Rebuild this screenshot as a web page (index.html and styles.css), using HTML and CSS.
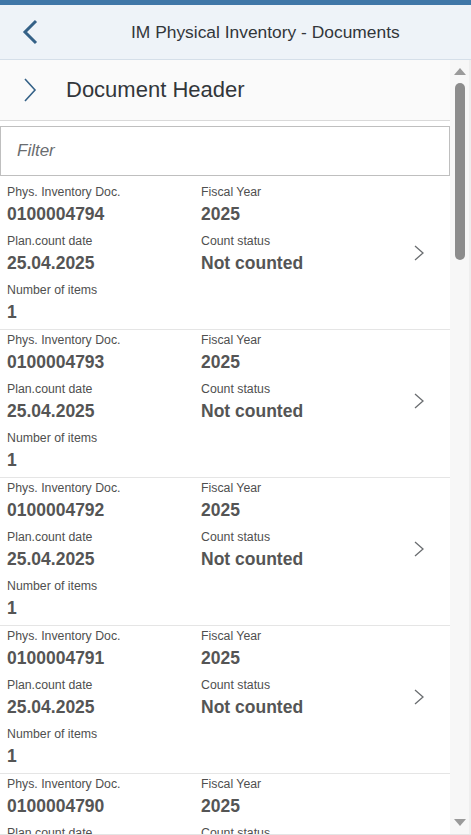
FILE: index.html
```html
<!DOCTYPE html>
<html lang="en">
<head>
  <meta charset="UTF-8" />
  <meta name="viewport" content="width=device-width, initial-scale=1.0"/>
  <title>IM Physical Inventory - Documents</title>
  <link rel="stylesheet" href="styles.css">
</head>
<body>

  <div class="shell">
    <div class="topline"></div>
    <header class="appbar">
      <button class="back" aria-label="Back">
        <svg width="18" height="26" viewBox="0 0 18 26"><path d="M15 2 L4 13 L15 24" fill="none" stroke="#346187" stroke-width="3"/></svg>
      </button>
      <h1 class="title">IM Physical Inventory - Documents</h1>
    </header>

    <div class="main">
      <div class="content">
        <div class="section">
          <svg width="14" height="24" viewBox="0 0 14 24"><path d="M2 1 L12 12 L2 23" fill="none" stroke="#346187" stroke-width="1.6"/></svg>
          <span>Document Header</span>
        </div>

        <div class="filter">
          <input type="text" placeholder="Filter">
        </div>

        <ul class="list" id="list"></ul>
      </div>

      <div class="scrollbar">
        <span class="arrow up"></span>
        <span class="thumb"></span>
        <span class="arrow down"></span>
      </div>
    </div>
  </div>

  <script>
    const docs = ['0100004794', '0100004793', '0100004792', '0100004791', '0100004790'];
    const list = document.getElementById('list');

    docs.forEach((doc) => {
      const li = document.createElement('li');
      li.className = 'item';
      li.innerHTML = `
        <div class="fields">
          <div class="field"><span class="label">Phys. Inventory Doc.</span><span class="value">${doc}</span></div>
          <div class="field"><span class="label">Fiscal Year</span><span class="value">2025</span></div>
          <div class="field"><span class="label">Plan.count date</span><span class="value">25.04.2025</span></div>
          <div class="field"><span class="label">Count status</span><span class="value">Not counted</span></div>
          <div class="field"><span class="label">Number of items</span><span class="value">1</span></div>
        </div>
        <svg class="nav" width="10" height="16" viewBox="0 0 10 16"><path d="M1 1 L9 8 L1 15" fill="none" stroke="#6a6d70" stroke-width="1.3"/></svg>`;
      list.appendChild(li);
    });
  </script>

</body>
</html>
```

FILE: styles.css
```css
html, body {
  margin: 0;
  height: 100%;
  overflow: hidden;
}
body {
  font-family: "Liberation Sans", Arial, sans-serif;
  color: #32363a;
  background-color: #ffffff;
}
.shell {
  height: 835px;
  display: flex;
  flex-direction: column;
}
.topline {
  height: 5px;
  background-color: #3f77a8;
  flex-shrink: 0;
}
.appbar {
  height: 55px;
  flex-shrink: 0;
  display: flex;
  align-items: center;
  background-color: #eef3f8;
  border-bottom: 1px solid #d5dfe9;
  box-sizing: border-box;
}
.back {
  background: none;
  border: none;
  padding: 0;
  margin-left: 21px;
  width: 18px;
  height: 26px;
  cursor: pointer;
}
.back svg {
  display: block;
}
.title {
  margin: 0 0 0 92px;
  font-size: 17.4px;
  font-weight: normal;
  color: #32363a;
  white-space: nowrap;
}
.main {
  flex: 1;
  display: flex;
  min-height: 0;
  border-bottom: 1px solid #e4e4e4;
}
.content {
  flex: 1;
  overflow: hidden;
  background-color: #ffffff;
}
.section {
  height: 60px;
  display: flex;
  align-items: center;
  gap: 29px;
  padding-left: 23px;
  background-color: #fafafa;
  border-bottom: 1px solid #d9d9d9;
}
.section span {
  font-size: 22px;
  color: #32363a;
}
.filter {
  padding: 5px 0 6px 0;
}
.filter input {
  width: 100%;
  height: 50px;
  box-sizing: border-box;
  border: 1px solid #bfbfbf;
  padding: 0 16px;
  font-family: "Liberation Sans", Arial, sans-serif;
  font-size: 17px;
  color: #32363a;
  background: #ffffff;
  outline: none;
}
.filter input::placeholder {
  font-style: italic;
  color: #6a6d70;
}
.list {
  list-style: none;
  margin: 0;
  padding: 0;
}
.item {
  display: flex;
  align-items: center;
  padding: 0 26px 5px 7px;
  border-bottom: 1px solid #e5e5e5;
}
.fields {
  flex: 1;
  display: grid;
  grid-template-columns: 194px 1fr;
  row-gap: 5px;
}
.field {
  display: flex;
  flex-direction: column;
}
.label {
  font-size: 12.3px;
  line-height: 20px;
  color: #4f4f4f;
}
.value {
  font-size: 17.5px;
  line-height: 24px;
  font-weight: bold;
  color: #555555;
}
.nav {
  flex-shrink: 0;
}
.scrollbar {
  width: 19px;
  flex-shrink: 0;
  background-color: #f7f7f7;
  border-right: 2px solid #eeeeee;
  display: flex;
  flex-direction: column;
  align-items: center;
}
.arrow {
  width: 0;
  height: 0;
  border-left: 6px solid transparent;
  border-right: 6px solid transparent;
}
.arrow.up {
  margin-top: 8px;
  border-bottom: 7px solid #9a9a9a;
}
.arrow.down {
  margin-top: auto;
  margin-bottom: 8px;
  border-top: 7px solid #9a9a9a;
}
.thumb {
  margin-top: 8px;
  width: 10px;
  height: 177px;
  border-radius: 5px;
  background-color: #8c8c8c;
}
```
